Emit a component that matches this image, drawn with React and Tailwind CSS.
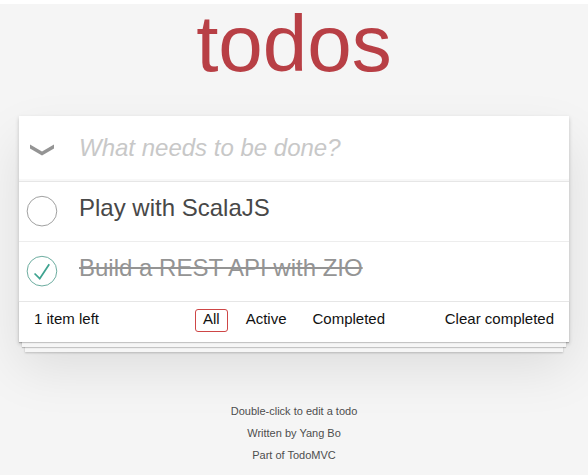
import React, { useState } from 'react';

const initialTodos = [
  { id: 1, title: 'Play with ScalaJS', completed: false },
  { id: 2, title: 'Build a REST API with ZIO', completed: true },
];

const ToggleIcon = ({ checked }) => (
  <svg width="40" height="40" viewBox="-10 -18 100 135" className="shrink-0">
    <circle
      cx="50"
      cy="50"
      r="50"
      fill="none"
      stroke={checked ? '#59A193' : '#949494'}
      strokeWidth="3"
    />
    {checked && <path fill="#3EA390" d="M72 25L42 71 27 56l-4 4 20 20 34-52z" />}
  </svg>
);

const App = () => {
  const [todos, setTodos] = useState(initialTodos);
  const [filter, setFilter] = useState('All');
  const [text, setText] = useState('');

  const left = todos.filter(t => !t.completed).length;

  const toggle = (id) =>
    setTodos(todos.map(t => (t.id === id ? { ...t, completed: !t.completed } : t)));

  return (
    <div className="min-h-screen bg-[#f5f5f5] font-['Liberation_Sans',Arial,sans-serif] text-[#111111]">
      <div className="max-w-[550px] mx-auto">
        {/* Title */}
        <h1 className="mt-[4px] h-[80px] text-center text-[80px] leading-[80px] font-normal text-[#b83f45]">
          todos
        </h1>

        {/* Panel */}
        <section className="mt-[32px] bg-white shadow-[0_2px_4px_0_rgba(0,0,0,0.2),0_25px_50px_0_rgba(0,0,0,0.1)]">
          <header className="flex items-center h-[65px] shadow-[inset_0_-2px_1px_rgba(0,0,0,0.03)]">
            <div className="w-[60px] shrink-0 flex items-center">
              <svg width="24" height="12" viewBox="0 0 24 12" className="ml-[11px] mt-[3px]">
                <path d="M0 0.5 L12 7.4 L24 0.5 L24 4.6 L12 11.6 L0 4.6 Z" fill="#949494" />
              </svg>
            </div>
            <input
              value={text}
              onChange={(e) => setText(e.target.value)}
              placeholder="What needs to be done?"
              className="flex-1 min-w-0 h-[65px] pt-[15px] pb-[17px] pr-[16px] text-[24px] leading-[33.6px] bg-transparent outline-none text-[#484848] placeholder:italic placeholder:text-[#c8c8c8]"
            />
          </header>

          <ul className="border-t border-[#e6e6e6]">
            {todos.map((todo, i) => (
              <li
                key={todo.id}
                className={`flex items-center ${i < todos.length - 1 ? 'border-b border-[#ededed]' : ''}`}
              >
                <button onClick={() => toggle(todo.id)} className="shrink-0">
                  <ToggleIcon checked={todo.completed} />
                </button>
                <label
                  className={`ml-[20px] pt-[12px] pb-[18px] pr-[15px] text-[24px] leading-[28.8px] ${
                    todo.completed ? 'text-[#949494] line-through' : 'text-[#484848]'
                  }`}
                >
                  {todo.title}
                </label>
              </li>
            ))}
          </ul>

          {/* Footer */}
          <footer className="relative h-[41px] border-t border-[#e6e6e6] px-[15px] pt-[7px] text-[15px] grid grid-cols-[1fr_auto_1fr] items-start shadow-[0_1px_1px_rgba(0,0,0,0.2),0_8px_0_-3px_#f6f6f6,0_9px_1px_-3px_rgba(0,0,0,0.2),0_16px_0_-6px_#f6f6f6,0_17px_2px_-6px_rgba(0,0,0,0.2)]">
            <span className="mt-[2px] leading-[15px] text-left">
              {left} item{left === 1 ? '' : 's'} left
            </span>
            <ul className="flex gap-[10px] px-[3px]">
              {['All', 'Active', 'Completed'].map(f => (
                <li key={f}>
                  <a
                    href={`#/${f === 'All' ? '' : f.toLowerCase()}`}
                    onClick={() => setFilter(f)}
                    className={`block h-[23px] px-[7px] pt-[1px] leading-[15px] rounded-[3px] border ${
                      filter === f ? 'border-[#ce4646]' : 'border-transparent'
                    }`}
                  >
                    {f}
                  </a>
                </li>
              ))}
            </ul>
            <span className="mt-[2px] leading-[15px] justify-self-end">
              <button onClick={() => setTodos(todos.filter(t => !t.completed))} className="leading-[15px] block">
                Clear completed
              </button>
            </span>
          </footer>
        </section>

        {/* Info */}
        <footer className="mt-[64px] flex flex-col gap-[11px] text-center text-[11px] leading-[11px] text-[#4d4d4d] [text-shadow:0_1px_0_rgba(255,255,255,0.5)]">
          <p>Double-click to edit a todo</p>
          <p>Written by Yang Bo</p>
          <p>Part of TodoMVC</p>
        </footer>
      </div>
    </div>
  );
};

export default App;
